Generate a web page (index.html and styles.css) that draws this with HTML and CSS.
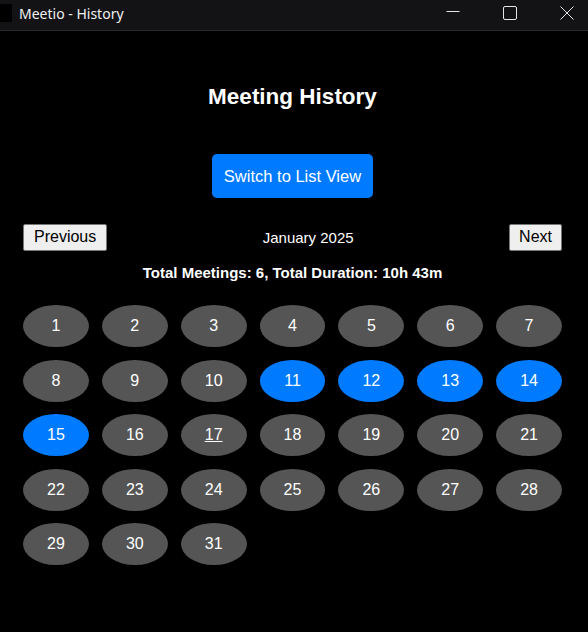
FILE: index.html
```html
<!DOCTYPE html>
<html>
    <head>
        <meta charset="utf-8">
        <title>Meetio - History</title>
        <link rel="stylesheet" href="styles.css">
    </head>

    <body>
        <div id="titlebar">
            <div class="app_icon"></div>
            <span class="win_title">Meetio - History</span>
            <div class="win_controls">
                <svg class="ctl" width="57" height="30" viewBox="0 0 57 30">
                    <path d="M29.5 11.5 H42.5" stroke="#e6e6e6" stroke-width="1" fill="none"/>
                </svg>
                <svg class="ctl" width="57" height="30" viewBox="0 0 57 30">
                    <rect x="29.5" y="6.5" width="13" height="13" rx="1.5" stroke="#e6e6e6" stroke-width="1" fill="none"/>
                </svg>
                <svg class="ctl" width="57" height="30" viewBox="0 0 57 30">
                    <path d="M29.5 6.5 L42.5 19.5 M42.5 6.5 L29.5 19.5" stroke="#e6e6e6" stroke-width="1" fill="none"/>
                </svg>
            </div>
        </div>

        <div id="content">
            <h1 class="page_title">Meeting History</h1>

            <div class="switch_wrap">
                <button class="switch_btn">Switch to List View</button>
            </div>

            <div class="month_nav">
                <button class="nav_btn">Previous</button>
                <span class="month">January 2025</span>
                <button class="nav_btn">Next</button>
            </div>

            <p class="totals">Total Meetings: 6, Total Duration: 10h 43m</p>

            <div class="calendar">
                <div class="day">1</div>
                <div class="day">2</div>
                <div class="day">3</div>
                <div class="day">4</div>
                <div class="day">5</div>
                <div class="day">6</div>
                <div class="day">7</div>
                <div class="day">8</div>
                <div class="day">9</div>
                <div class="day">10</div>
                <div class="day has_meeting">11</div>
                <div class="day has_meeting">12</div>
                <div class="day has_meeting">13</div>
                <div class="day has_meeting">14</div>
                <div class="day has_meeting">15</div>
                <div class="day">16</div>
                <div class="day today">17</div>
                <div class="day">18</div>
                <div class="day">19</div>
                <div class="day">20</div>
                <div class="day">21</div>
                <div class="day">22</div>
                <div class="day">23</div>
                <div class="day">24</div>
                <div class="day">25</div>
                <div class="day">26</div>
                <div class="day">27</div>
                <div class="day">28</div>
                <div class="day">29</div>
                <div class="day">30</div>
                <div class="day">31</div>
            </div>
        </div>
    </body>
</html>
```

FILE: styles.css
```css
body {
    margin : 0;
    background-color : #000;
    color : #fff;
    font-family : "Liberation Sans", Arial, sans-serif;
}

/* window chrome */

#titlebar {
    height : 30px;
    display : flex;
    align-items : center;
    background-color : #131316;
    border-bottom : 1px solid #2b2b2e;
}

.app_icon {
    width : 12px;
    height : 18px;
    margin-top : -4px;
    background-color : #000;
}

.win_title {
    margin-left : 7px;
    margin-top : -3px;
    font-family : "Noto Sans", sans-serif;
    font-size : 14px;
    color : #f0f0f0;
}

.win_controls {
    margin-left : auto;
    display : flex;
}

.ctl {
    display : block;
}

/* page */

#content {
    padding : 0 26px 0 23px;
}

.page_title {
    margin : 53px 0 0;
    font-size : 22.5px;
    line-height : 25px;
    text-align : center;
}

.switch_wrap {
    margin-top : 45px;
    text-align : center;
}

.switch_btn {
    font-family : inherit;
    font-size : 16.5px;
    line-height : 18px;
    color : #fff;
    background-color : #007bff;
    border : none;
    border-radius : 5px;
    padding : 13px 12px;
}

.month_nav {
    margin-top : 26px;
    display : flex;
    justify-content : space-between;
    align-items : center;
}

.nav_btn {
    font-family : inherit;
    font-size : 16px;
    line-height : 18px;
    color : #000;
    background-color : #efefef;
    border : 1px solid #767676;
    border-radius : 2px;
    padding : 3px 10px 4px;
}

.nav_btn + .month + .nav_btn {
    padding : 3px 9px 4px;
}

.month {
    font-size : 15px;
}

.totals {
    margin : 13px 0 0;
    font-size : 15px;
    line-height : 17px;
    font-weight : bold;
    text-align : center;
}

.calendar {
    margin-top : 24px;
    display : grid;
    grid-template-columns : repeat(7, 1fr);
    column-gap : 13px;
    row-gap : 12.5px;
}

.day {
    height : 42px;
    display : flex;
    align-items : center;
    justify-content : center;
    background-color : #555;
    border-radius : 50%;
    font-size : 16px;
}

.day.has_meeting {
    background-color : #007bff;
}

.day.today {
    text-decoration : underline;
}
```
